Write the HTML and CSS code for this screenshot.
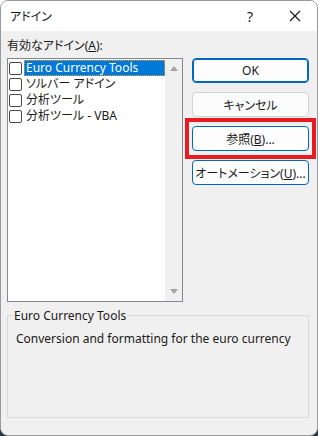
FILE: index.html
```html
<!DOCTYPE html>
<html lang="ja">
<head>
    <meta charset="UTF-8">
    <meta name="viewport" content="width=device-width, initial-scale=1.0">
    <title>アドイン</title>
    <link rel="stylesheet" href="styles.css">
</head>
<body>
    <div class="window">
        <div class="titlebar">
            <span class="title">アドイン</span>
            <span class="help">?</span>
            <svg class="close" width="12" height="12" viewBox="0 0 12 12">
                <path d="M1 1 L11 11 M11 1 L1 11" stroke="#1a1a1a" stroke-width="1.2" fill="none"/>
            </svg>
        </div>

        <div class="main">
            <label class="list-label">有効なアドイン(<u>A</u>):</label>

            <div class="listbox">
                <ul class="items">
                    <li class="item selected"><span class="check"></span><span class="name">Euro Currency Tools</span></li>
                    <li class="item"><span class="check"></span><span class="name">ソルバー アドイン</span></li>
                    <li class="item"><span class="check"></span><span class="name">分析ツール</span></li>
                    <li class="item"><span class="check"></span><span class="name">分析ツール - VBA</span></li>
                </ul>
                <div class="scrollbar">
                    <span class="arrow up"></span>
                    <span class="arrow down"></span>
                </div>
            </div>

            <div class="buttons">
                <button class="btn default">OK</button>
                <button class="btn plain">キャンセル</button>
                <div class="marker">
                    <button class="btn accent">参照(<u>B</u>)...</button>
                </div>
                <button class="btn accent">オートメーション(<u>U</u>)...</button>
            </div>
        </div>

        <fieldset class="details">
            <legend>Euro Currency Tools</legend>
            <p>Conversion and formatting for the euro currency</p>
        </fieldset>
    </div>
</body>
</html>
```

FILE: styles.css
```css
html {
    background: linear-gradient(#ffffff 0, #ffffff 50%, #2b3442 50%);
}
body {
    margin: 0;
    font-family: "Noto Sans", "Noto Sans CJK JP", sans-serif;
    font-size: 12px;
    font-feature-settings: "palt";
    color: #1a1a1a;
}
.window {
    width: 318px;
    height: 436px;
    box-sizing: border-box;
    border: 1px solid #9a9a9a;
    border-radius: 8px;
    overflow: hidden;
    background-color: #f0f0f0;
    display: flex;
    flex-direction: column;
}
.titlebar {
    height: 30px;
    background-color: #ffffff;
    display: flex;
    align-items: center;
    padding-left: 9px;
}
.title {
    flex: 1;
    font-size: 12px;
}
.help {
    font-size: 14px;
    margin-right: 36px;
}
.close {
    margin-right: 16px;
}
.main {
    display: grid;
    grid-template-columns: 176px 117px;
    column-gap: 9px;
    padding: 7px 0 0 6px;
}
.list-label {
    grid-column: 1 / 3;
    line-height: 16px;
    margin-bottom: 4px;
}
.listbox {
    height: 244px;
    box-sizing: border-box;
    border: 1px solid #828790;
    background-color: #ffffff;
    display: flex;
}
.items {
    flex: 1;
    list-style: none;
    margin: 0;
    padding: 1px 0 0 1px;
}
.item {
    display: flex;
    align-items: center;
    height: 16px;
    white-space: nowrap;
}
.check {
    width: 11px;
    height: 11px;
    border: 1px solid #4a4a4a;
    border-radius: 2px;
    background-color: #ffffff;
    margin-right: 2px;
    flex: none;
}
.name {
    flex: 1;
    padding-left: 2px;
    line-height: 16px;
}
.selected .name {
    background-color: #0078d7;
    color: #ffffff;
    outline: 1px dotted #f0a030;
    outline-offset: -1px;
}
.scrollbar {
    width: 17px;
    background-color: #f0f0f0;
    display: flex;
    flex-direction: column;
    justify-content: space-between;
    align-items: center;
    padding: 7px 0 7px;
}
.arrow {
    width: 0;
    height: 0;
    border-left: 4px solid transparent;
    border-right: 4px solid transparent;
}
.arrow.up {
    border-bottom: 5px solid #a3a3a3;
}
.arrow.down {
    border-top: 5px solid #a3a3a3;
}
.buttons {
    display: flex;
    flex-direction: column;
    gap: 9px;
}
.btn {
    height: 25px;
    font-family: inherit;
    font-size: 12px;
    font-feature-settings: "palt";
    white-space: nowrap;
    color: #1a1a1a;
    background-color: #fdfdfd;
    border-radius: 4px;
    padding: 0;
}
.default {
    border: 1px solid #0067c0;
    box-shadow: inset 0 0 0 1px #0067c0;
}
.plain {
    border: 1px solid #d2d2d2;
    background-color: #fbfbfb;
}
.accent {
    border: 1px solid #0067c0;
}
.marker {
    display: flex;
    flex-direction: column;
    margin: -8px -7px;
    padding: 4px 3px;
    border: 4px solid #e81b23;
}
.details {
    margin: 5px 8px 0 6px;
    height: 111px;
    box-sizing: border-box;
    border: 1px solid #d9d9d9;
    padding: 0 8px;
}
.details legend {
    padding: 0 1px;
    margin-left: -3px;
}
.details p {
    margin: 6px 0 0;
}
```
